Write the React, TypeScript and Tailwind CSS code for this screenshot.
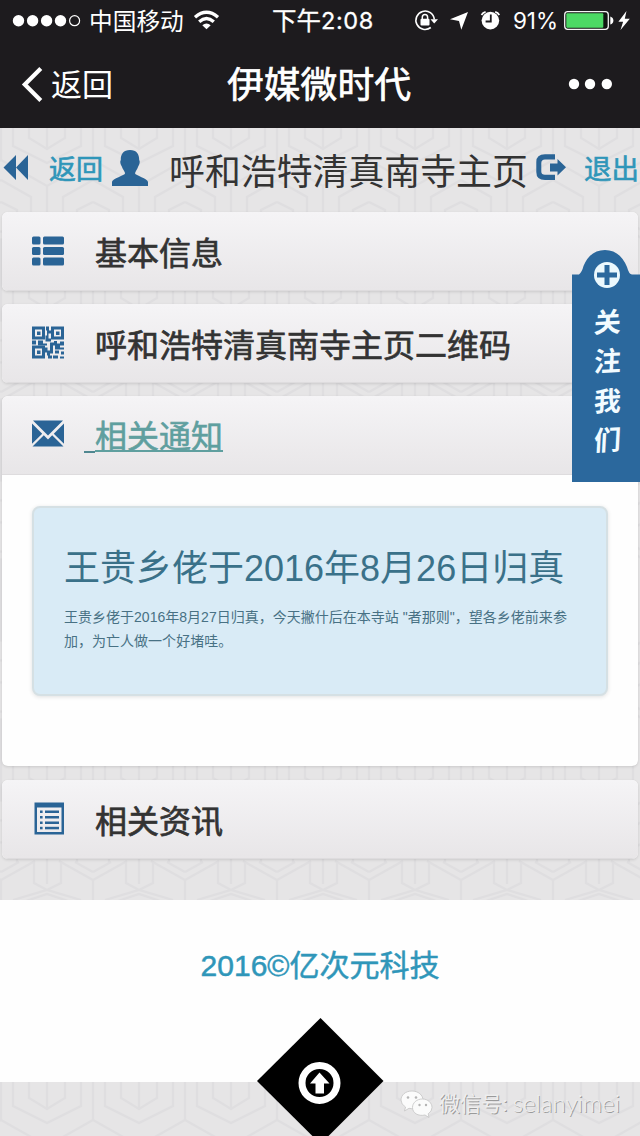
import type { ReactNode } from "react";

const BLUE = "#2a6496";

function Backdrop() {
  return (
    <svg className="absolute inset-0 h-full w-full" aria-hidden="true">
      <defs>
        <pattern id="lattice" x="1" y="880" width="92" height="160" patternUnits="userSpaceOnUse">
          <rect width="92" height="160" fill="#e6e5e6" />
          <g fill="none" stroke="#dfdee0" strokeWidth="2.2">
            <path d="M0 0V80M92 0V80M0 160L34 141M92 160L58 141M0 152L18 142M92 152L74 142M33 141V160M60 141V160M46 136V160" />
            <path d="M0 0L34 -19M92 0L58 -19M33 0V3L46 10L60 3V0M46 0V4M12 20L46 10L80 20M28 20L46 14L64 20L46 29Z" />
            <path d="M12 20V66L46 83L80 66V20M28 32V58L46 69L64 58V32M46 41V69M28 32L46 41L64 32" />
            <path d="M0 80L46 106L92 80M46 106V136M0 100L30 117V136M92 100L62 117V136M0 122L16 130V142M92 122L76 130V142" />
          </g>
        </pattern>
      </defs>
      <rect width="640" height="1136" fill="url(#lattice)" />
    </svg>
  );
}

function StatusBar() {
  return (
    <div className="flex h-10 items-center text-[24px] leading-10">
      <svg className="ml-3 h-10 w-[70px] shrink-0" viewBox="12 0 70 40" fill="#fff">
        <circle cx="18.5" cy="20.7" r="5.7" />
        <circle cx="32.6" cy="20.7" r="5.7" />
        <circle cx="46.6" cy="20.7" r="5.7" />
        <circle cx="60.5" cy="20.7" r="5.7" />
        <circle cx="74.6" cy="20.7" r="5" fill="none" stroke="#fff" strokeWidth="1.2" />
      </svg>
      <span className="ml-[7px] w-[96px] whitespace-nowrap pt-[3px] text-[23.7px]">中国移动</span>
      <svg className="ml-[8px] h-10 w-[28px] shrink-0" viewBox="193 0 28 40" fill="none" stroke="#fff" strokeWidth="3.4">
        <path d="M195 17.2Q206.5 7.5 218 17.2" />
        <path d="M199.2 21.8Q206.5 15.4 213.8 21.8" />
        <path d="M202.3 25.2Q206.5 21.8 210.7 25.2L206.5 29.3Z" fill="#fff" stroke="none" />
      </svg>
      <span className="ml-[51px] flex w-[104px] items-center whitespace-nowrap [-webkit-text-stroke:0.3px_#fff]">
        <span className="pt-[3px] text-[24.5px]">下午</span>
        <span className="pt-px font-[Inter] text-[23.5px] tracking-[0.6px]">2:08</span>
      </span>
      <svg className="ml-[38px] h-10 w-[90px] shrink-0" viewBox="414 0 90 40" fill="none" stroke="#fff">
        <path d="M430.8 27.5A9.2 9.2 0 1 1 434.3 19.5" strokeWidth="1.6" />
        <path d="M430.5 19.2H438L434.2 23.6Z" fill="#fff" stroke="none" />
        <rect x="420.5" y="18.7" width="9" height="6.8" rx="1" fill="#fff" stroke="none" />
        <path d="M422.3 19V17.3A2.6 2.8 0 0 1 427.6 17.3V19" strokeWidth="1.5" />
        <path d="M468 12L461.3 29.8L459 21L450 19.3Z" fill="#fff" stroke="none" />
        <circle cx="490.4" cy="20.6" r="8.8" fill="#fff" stroke="none" />
        <path d="M490.8 14.5V21.5H485.6" stroke="#1d1b1e" strokeWidth="1.8" />
        <path d="M481.5 15A6 6 0 0 1 485.6 11.8M495.2 11.8A6 6 0 0 1 499.3 15" strokeWidth="1.7" />
      </svg>
      <span className="ml-[9px] w-[46px] whitespace-nowrap pt-px font-[Inter] text-[22.5px] tracking-[-0.1px]">91%</span>
      <svg className="ml-[4px] h-10 w-[70px] shrink-0" viewBox="563 0 70 40">
        <rect x="564.7" y="11.7" width="43.6" height="17.6" rx="3" fill="#101511" stroke="#f4f4f4" strokeWidth="1.3" />
        <rect x="566.3" y="13.2" width="37" height="14.6" rx="1" fill="#4cd964" />
        <path d="M610.3 16.5Q613.4 17.5 613.4 20.5Q613.4 23.5 610.3 24.5Z" fill="#fff" />
        <path d="M626.5 11L618.4 21.7H623.1L620.5 30L629.8 18.7H624.8Z" fill="#fff" />
      </svg>
    </div>
  );
}

function NavBar() {
  return (
    <div className="flex h-[88px] items-center">
      <svg className="ml-5 h-[44px] w-6 shrink-0" viewBox="20 62 24 44" fill="none" stroke="#fff" strokeWidth="4.2">
        <path d="M40.8 68.5L24.8 84.5L40.8 100.5" />
      </svg>
      <span className="ml-[7px] w-[62px] whitespace-nowrap pt-1 text-[31px] leading-[44px]">返回</span>
      <h1 className="ml-[114px] w-[185px] whitespace-nowrap pt-[3px] text-[36.8px] leading-[44px] [-webkit-text-stroke:0.7px_#fff]">伊媒微时代</h1>
      <svg className="ml-[156px] h-5 w-[46px]" viewBox="568 74 46 20" fill="#fff">
        <circle cx="574" cy="84" r="5.2" />
        <circle cx="590" cy="84" r="5.2" />
        <circle cx="606.8" cy="84" r="5.2" />
      </svg>
    </div>
  );
}

function PageHeader() {
  return (
    <div className="flex h-[84px] items-start pt-[18px] text-[#2f96b9]">
      <svg className="h-[44px] w-8 shrink-0" viewBox="0 146 32 44" fill={BLUE}>
        <path d="M3.5 167.5L16 155V167.5L28 155V180L16 167.5V180Z" />
      </svg>
      <span className="ml-[17px] w-[56px] whitespace-nowrap pt-[2px] text-[27px] leading-[44px] [-webkit-text-stroke:0.6px_#2f96b9]">返回</span>
      <svg className="ml-[6px] h-[44px] w-[38px] shrink-0" viewBox="111 146 38 44" fill={BLUE}>
        <path d="M130 150C136.5 150 139.3 154 139.2 160C140.3 161.5 139.6 164.5 138.2 166.4C137.4 169.3 135.2 171.5 135 173.2C135.2 175.5 148 178.5 148 182V186H112V182C112 178.5 125 175.5 125.1 173.2C125 171.5 122.6 169.3 121.8 166.4C120.4 164.5 119.7 161.5 120.8 160C120.7 154 123.5 150 130 150Z" />
      </svg>
      <h2 className="ml-[20px] w-[360px] whitespace-nowrap pt-[3px] text-[35.9px] leading-[48px] text-[#333]">呼和浩特清真南寺主页</h2>
      <svg className="ml-[6px] h-[44px] w-[34px] shrink-0" viewBox="535 146 34 44" fill={BLUE}>
        <path d="M555 154.3H545Q536.3 154.3 536.3 162V172Q536.3 180 545 180H555V174.8H545Q541.3 174.8 541.3 171.5V163Q541.3 159.5 545 159.5H555Z" />
        <path d="M550 163.5H557.5V159L566 167.3L557.5 175.5V171.5H550Z" />
      </svg>
      <span className="ml-[15px] w-[56px] overflow-hidden whitespace-nowrap pt-[2px] text-[27.5px] leading-[44px] [-webkit-text-stroke:0.6px_#2f96b9]">退出</span>
    </div>
  );
}

function ListIcon() {
  return (
    <svg className="h-9 w-9" viewBox="30 233.500 36 36" fill={BLUE}>
      {[237, 247.5, 258].map((y) => (
        <g key={y}>
          <rect x="32" y={y} width="8.5" height="8" rx="1.5" />
          <rect x="43" y={y} width="21" height="8" rx="1.5" />
        </g>
      ))}
    </svg>
  );
}

function QrIcon() {
  return (
    <svg className="h-9 w-9" viewBox="-2 -1.500 36 36">
      <g fill="none" stroke={BLUE} strokeWidth="3">
        <path d="M1.5 1.5H11.5V11.5H1.5ZM20.5 1.5H30.5V11.5H20.5ZM1.5 20.5H11.5V30.5H1.5Z" />
      </g>
      <g fill={BLUE}>
        <path d="M5 5H8.5V8.5H5ZM24 5H27.5V8.5H24ZM5 24H8.5V27.5H5Z" />
        <path d="M14 0H17V4H19V7H16.5V12H19V15H13.5V9H15V4H14ZM0 14H4V18H0ZM6 14H11V17H15V19H6ZM13 21H15.5V24H18V16H22V14.5H25V17H28V15H32V19H28V21H32V23H23V19H21V27H18V29H15V26H13ZM16 29H20V32H16ZM23 24H27V27H23ZM29 25H32V28H29ZM21 29H26V32H21ZM28 30H32V32H28Z" />
      </g>
    </svg>
  );
}

function MailIcon() {
  return (
    <svg className="h-9 w-9" viewBox="-2 -3.500 36 36" fill={BLUE}>
      <path d="M1 0H31L16 15ZM0 3L10.2 13.2L0 23.3ZM32 3L21.8 13.2L32 23.3ZM11.8 14.8L16 19L20.2 14.8L31.5 26H.5Z" />
    </svg>
  );
}

function ListAltIcon() {
  return (
    <svg className="h-9 w-9" viewBox="32 800.500 36 36" fill={BLUE}>
      <path fillRule="evenodd" d="M36.5 802H66V834H36.5ZM39 807V831.5H63.5V807Z" />
      {[810, 815.5, 821, 826.3].map((y) => (
        <g key={y}>
          <rect x="42" y={y} width="2.6" height="2.5" />
          <rect x="47" y={y} width="14" height="2.5" />
        </g>
      ))}
    </svg>
  );
}

type SectionProps = { icon: ReactNode; title: string; active?: boolean; children?: ReactNode };

function Section({ icon, title, active = false, children }: SectionProps) {
  return (
    <section className="overflow-hidden rounded-[6px] bg-[#fefefe] shadow-[0_1px_3px_rgba(0,0,0,0.12)]">
      <div className="flex h-[79px] items-center border-b border-[#dedcde] bg-linear-to-b from-[#f5f4f6] to-[#e8e6e8] pl-7">
        {icon}
        {active ? (
          <div className="ml-[18px] flex h-[48px] items-end pt-[5px]">
            <span className="mb-[6px] h-[2px] w-[11px] bg-[#4f8790]" />
            <span className="-mb-[2px] whitespace-nowrap text-[32px] leading-[48px] text-[#5f9f9f] underline decoration-2 underline-offset-[2px] [-webkit-text-stroke:0.6px_#5f9f9f]">
              {title}
            </span>
          </div>
        ) : (
          <span className="ml-[29px] whitespace-nowrap pt-[5px] text-[32px] leading-[48px] text-[#333] [-webkit-text-stroke:0.7px_#333]">{title}</span>
        )}
      </div>
      {children}
    </section>
  );
}

function Notice() {
  return (
    <div className="h-[291px] px-[30px] pt-[31px]">
      <div className="h-[190px] rounded-lg border-2 border-[#d5e0e4] bg-[#d9ebf6] px-[30px] pt-[37px] shadow-[0_1px_4px_rgba(0,0,0,0.12)]">
        <h3 className="whitespace-nowrap text-[36px] leading-[48px] text-[#3a7189]">王贵乡佬于2016年8月26日归真</h3>
        <p className="mt-[12px] whitespace-nowrap text-[14.030px] leading-6 text-[#487184]">
          王贵乡佬于2016年8月27日归真，今天撇什后在本寺站 "者那则"，望各乡佬前来参
          <br />
          加，为亡人做一个好堵哇。
        </p>
      </div>
    </div>
  );
}

function FollowTab() {
  return (
    <div className="absolute left-[572px] top-[250px] h-[232px] w-[68px]">
      <svg className="absolute inset-0 h-full w-full" viewBox="0 0 68 232">
        <path d="M0 24.5H7Q10 22 11.5 16Q18 0 33 0Q48 0 55 17Q57 24.500 60 24.500H68V232H0Z" fill="#2b689d" />
        <circle cx="35" cy="25" r="13" fill="#ebf8fd" />
        <path d="M35 15V35M25 25H45" stroke="#2b689d" strokeWidth="5" />
      </svg>
      <div className="relative flex flex-col items-center pl-[2px] pt-[54px] text-[27px] font-bold leading-[39.3px] text-[#f2fbff]">
        <span className="-rotate-3 -skew-x-6">关</span>
        <span className="-rotate-3 -skew-x-6">注</span>
        <span className="-rotate-3 -skew-x-6">我</span>
        <span className="-rotate-3 -skew-x-6">们</span>
      </div>
    </div>
  );
}

function TopButton() {
  return (
    <svg className="absolute left-[256px] top-[1017px] h-[119px] w-32" viewBox="256 1017 128 119">
      <path d="M320.500 1018L383.500 1081L320.500 1144L257 1081Z" fill="#000" />
      <circle cx="319.5" cy="1083" r="17.500" fill="none" stroke="#fff" strokeWidth="7" />
      <path d="M319.500 1072.500L329.500 1083.500H324V1093.500H315.500V1083.500H310Z" fill="#fff" />
    </svg>
  );
}

function Watermark() {
  return (
    <div className="absolute left-[400px] top-[1086px] flex h-9 items-center text-[#eeeeee]">
      <svg className="h-9 w-[34px]" viewBox="0 0 34 36">
        <g fill="#fbfbfb" stroke="#c4c4c4" strokeWidth=".8">
          <path d="M12 5C5.500 5 1 9 1 14Q1 18.500 5.500 21L4.500 25L9 22.300Q12 23 14 22.500Q23 20 23 14C23 9 18 5 12 5Z" />
          <path d="M22.500 13C16.500 13 12.500 17 12.500 21.500C12.500 27 18 30.500 25 29L29 31.500L28.200 27.800Q32 25.500 32 21.500C32 17 28 13 22.500 13Z" />
        </g>
        <g fill="#b4b4b4">
          <circle cx="8" cy="11.500" r="1.300" />
          <circle cx="16" cy="11.500" r="1.300" />
          <circle cx="19.500" cy="19" r="1.200" />
          <circle cx="26" cy="19" r="1.200" />
        </g>
      </svg>
      <span className="ml-[5px] whitespace-nowrap text-[21px] leading-9 [text-shadow:1px_1px_0.500px_#9a9a9a]">微信号:</span>
      <span className="-mt-[3px] ml-[5px] whitespace-nowrap font-[Lato] text-[24px] font-light leading-9 [text-shadow:1px_1px_0.500px_#9a9a9a]">selanyimei</span>
    </div>
  );
}

export default function App() {
  return (
    <div className="relative h-[1136px] w-[640px] overflow-hidden bg-[#e5e4e5] font-['Liberation_Sans','Noto_Sans_CJK_SC',sans-serif]">
      <Backdrop />
      <div className="relative flex flex-col">
        <header className="h-32 bg-[#1d1b1e] text-white">
          <StatusBar />
          <NavBar />
        </header>
        <PageHeader />
        <main className="flex flex-col gap-[13px] px-[2px]">
          <Section icon={<ListIcon />} title="基本信息" />
          <Section icon={<QrIcon />} title="呼和浩特清真南寺主页二维码" />
          <Section icon={<MailIcon />} title="相关通知" active>
            <Notice />
          </Section>
          <div className="mt-px">
            <Section icon={<ListAltIcon />} title="相关资讯" />
          </div>
        </main>
        <footer className="mt-[41px] flex h-[182px] justify-center bg-[#fefefe] pt-[42px]">
          <span className="whitespace-nowrap text-[30px] leading-[48px] text-[#2f96b9] [-webkit-text-stroke:0.500px_#2f96b9]">2016©亿次元科技</span>
        </footer>
      </div>
      <FollowTab />
      <TopButton />
      <Watermark />
    </div>
  );
}
